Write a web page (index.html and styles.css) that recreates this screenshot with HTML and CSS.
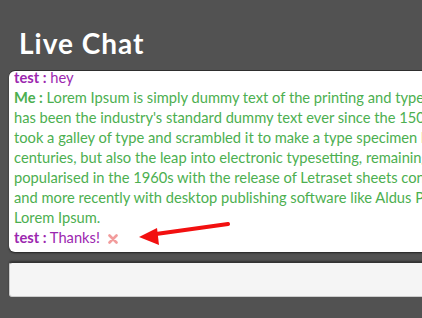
FILE: index.html
```html
<!DOCTYPE html>
<html lang="en">
<head>
  <meta charset="UTF-8" />
  <meta name="viewport" content="width=device-width, initial-scale=1.0" />
  <title>Live Chat</title>
  <link rel="stylesheet" href="styles.css">
</head>
<body>
  <h1 class="title">Live Chat</h1>

  <div class="chat-box">
    <ul class="messages">
      <li class="msg them"><strong>test :</strong> hey</li>
      <li class="msg me"><strong>Me :</strong> Lorem Ipsum is simply dummy text of the printing and typesetting industry. Lorem Ipsum<br>has been the industry's standard dummy text ever since the 1500s, when an unknown printer<br>took a galley of type and scrambled it to make a type specimen book. It has survived not only five<br>centuries, but also the leap into electronic typesetting, remaining essentially unchanged. It was<br>popularised in the 1960s with the release of Letraset sheets containing Lorem Ipsum passages,<br>and more recently with desktop publishing software like Aldus PageMaker including versions of<br>Lorem Ipsum.</li>
      <li class="msg them"><strong>test :</strong> Thanks!
        <span class="delete">
          <svg width="10" height="10" viewBox="0 0 10 10"><path d="M1.5 1.5 L8.5 8.5 M8.5 1.5 L1.5 8.5" stroke="#f29c9c" stroke-width="2.6" stroke-linecap="round"/></svg>
        </span>
      </li>
    </ul>
    <svg class="arrow" width="100" height="28" viewBox="0 0 100 28">
      <path d="M98 2 L26 12" stroke="#f21010" stroke-width="4" stroke-linecap="round"/>
      <path d="M9 15 L27 6 L29 23 Z" fill="#f21010"/>
    </svg>
  </div>

  <input class="chat-input" type="text">
</body>
</html>
```

FILE: styles.css
```css
body {
  margin: 0;
  padding: 0;
  background: #525252;
  font-family: 'Lato', 'Noto Sans', sans-serif;
  overflow: hidden;
}

.title {
  margin: 0;
  padding: 27px 0 0 19px;
  height: 44px;
  color: #fff;
  font-size: 28px;
  line-height: 32px;
  font-weight: bold;
  letter-spacing: 1px;
}

.chat-box {
  position: relative;
  margin-left: 9px;
  width: 640px;
  height: 181px;
  background: #fff;
  border-radius: 6px;
  box-shadow: 0 -1px 0 #2e2e2e, 0 1px 2px rgba(0, 0, 0, 0.6);
  overflow: hidden;
}

.messages {
  list-style: none;
  margin: -4px 0 0 0;
  padding: 0 0 0 5px;
  font-size: 14.7px;
  line-height: 20px;
  white-space: nowrap;
}

.msg.them {
  color: #9c27b0;
}

.msg.me {
  color: #4caf50;
}

.delete {
  display: inline-block;
  margin-left: 4px;
  vertical-align: -1px;
}

.arrow {
  position: absolute;
  left: 121px;
  top: 151px;
}

.chat-input {
  display: block;
  box-sizing: border-box;
  margin: 10px 0 0 9px;
  width: 640px;
  height: 35px;
  background: #f5f5f5;
  border: 1px solid #ccc;
  border-top-color: #333;
  border-radius: 3px;
  box-shadow: 0 -1px 2px rgba(0, 0, 0, 0.4);
}
```
